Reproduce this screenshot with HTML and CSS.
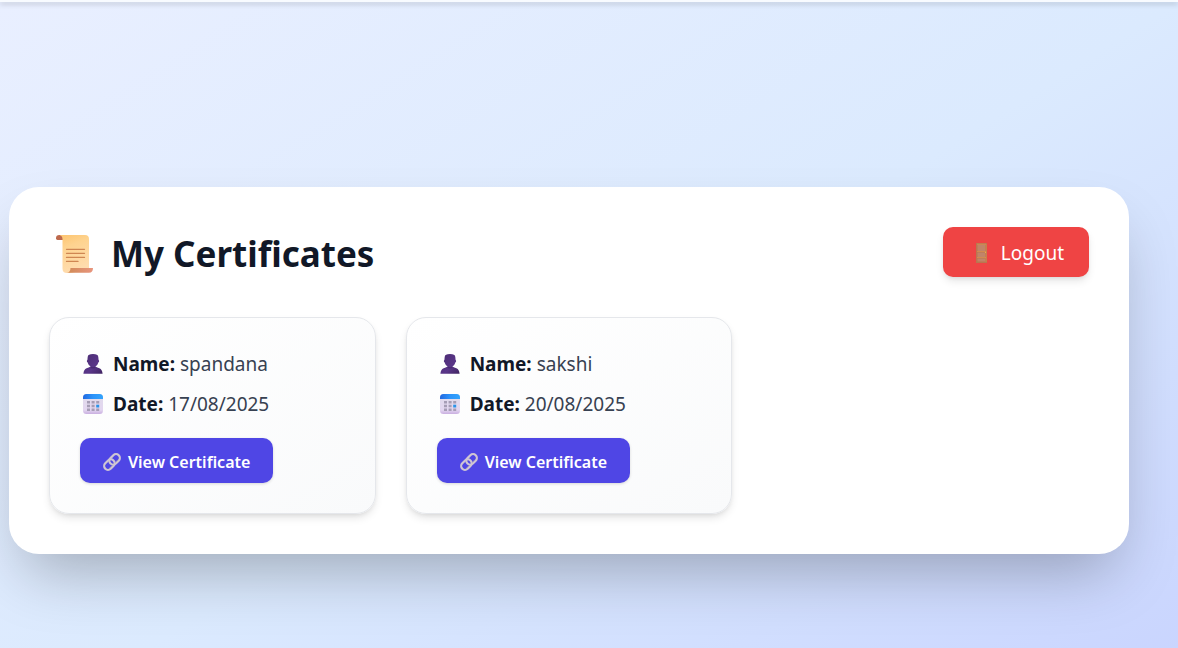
FILE: index.html
```html
<!DOCTYPE html>
<html lang="en">
<head>
<meta charset="utf-8">
<meta name="viewport" content="width=device-width, initial-scale=1">
<title>My Certificates</title>
<link rel="stylesheet" href="styles.css">
</head>
<body>
<svg class="defs" aria-hidden="true">
  <defs>
    <linearGradient id="paper" x1="0" y1="0" x2="0.3" y2="1"><stop offset="0" stop-color="#fdc46f"/><stop offset="0.35" stop-color="#fed38f"/><stop offset="1" stop-color="#ffdcae"/></linearGradient>
    <linearGradient id="curl" x1="0" y1="0" x2="1" y2="0"><stop offset="0" stop-color="#d08a55"/><stop offset="1" stop-color="#e8957e"/></linearGradient>
    <linearGradient id="skin" x1="0" y1="0" x2="1" y2="1"><stop offset="0" stop-color="#4a2c72"/><stop offset="0.6" stop-color="#5a3689"/><stop offset="1" stop-color="#3f2460"/></linearGradient>
    <linearGradient id="caltop" x1="0" y1="0" x2="1" y2="0"><stop offset="0" stop-color="#2168e0"/><stop offset="0.5" stop-color="#2b93fa"/><stop offset="1" stop-color="#33a4fc"/></linearGradient>
    <linearGradient id="calbody" x1="0" y1="0" x2="0" y2="1"><stop offset="0" stop-color="#e0dcea"/><stop offset="0.8" stop-color="#e3d6f0"/><stop offset="1" stop-color="#c9aee0"/></linearGradient>
    <symbol id="person" viewBox="0 0 20 20">
      <path fill="url(#skin)" d="M4.700 3C4.900 1 6.500.1 10 .1s5.100.9 5.300 2.900l.3 3c.8.300.7 2-.3 2.400-.5 1.900-1.500 3.200-3 4.100 1.500.8 2.700 1.200 4.100 1.800 2 .9 2.900 2.600 3.200 5.500H.4c.3-2.900 1.200-4.600 3.200-5.500 1.400-.6 2.600-1 4.100-1.800-1.500-.9-2.500-2.200-3-4.100-1-.4-1.100-2.100-.3-2.400z"/>
      <path fill="#38205a" opacity="0.45" d="M7.700 12.500c1.500.8 3.100.8 4.600 0v1.200c-1.200 1.200-3.400 1.200-4.600 0z"/>
    </symbol>
    <symbol id="calendar" viewBox="0 0 20 20">
      <rect width="20" height="20" rx="3.500" fill="url(#calbody)"/>
      <path fill="url(#caltop)" d="M0 5V3.500Q0 0 3.500 0h13Q20 0 20 3.500V5z"/>
      <g fill="#a69db5"><path d="M4 7h3v2.500H4zM8.600 7h3v2.500h-3zM13.200 7h3v2.500h-3zM4 10.700h3v2.500H4zM8.600 10.700h3v2.500h-3zM4 14.400h3v2.500H4zM8.600 14.400h3v2.500h-3zM13.200 14.400h3v2.500h-3z"/></g>
      <path fill="#2b93e8" d="M13.200 10.700h3v2.800h-3z"/>
    </symbol>
    <symbol id="link" viewBox="0 0 18 18">
      <g fill="none" stroke="#cfc5d3" stroke-width="2.200" transform="rotate(-45 9 9)">
        <rect x="-0.500" y="5.200" width="11.600" height="7.600" rx="3.800"/>
        <rect x="6.900" y="5.200" width="11.600" height="7.600" rx="3.800"/>
        <path stroke="#a99eaf" stroke-width="0.700" d="M3 11.600h4M11 11.600h4"/>
      </g>
    </symbol>
  </defs>
</svg>
<div class="topbar"></div>
<main class="page">
  <section class="panel">
    <header class="panel-head">
      <h1 class="title">
        <svg class="title-icon" viewBox="0 0 37 38" aria-hidden="true">
          <path fill="#bd694d" d="M0 3.300Q0 0 3.300 0H8v5H1.500Q0 5 0 3.300z"/>
          <path fill="url(#paper)" d="M3.500 0H29q4 0 4 4v29.500L15 38h-4q-4.500 0-4.500-4.500V4Q6.500 1 3.500 0z"/>
          <path fill="url(#curl)" d="M14.500 33H37q0 4.700-4 4.700H10.500q4 0 4-4.700z"/>
          <path fill="none" stroke="#cf8652" stroke-width="1.300" stroke-linecap="round" d="M10.500 14.300H28.500M10.500 18.300H28.500M10.500 22.400H28.500M10.500 26.400H22"/>
        </svg>
        My Certificates
      </h1>
      <button class="logout" type="button">
        <svg class="door-icon" viewBox="0 0 11 20" aria-hidden="true">
          <path fill="#b9764f" d="M0 0h11v20H0z"/>
          <path fill="#c18468" d="M1.500 1.500h7.500v6.500H1.500zM1.500 9.500h7.500v4.500H1.500zM1.500 15.500h7.500v3H1.500z"/>
          <path fill="none" stroke="#dc9450" stroke-width="0.700" d="M1 1.200h9v17.600M1 8.500h9M1 14.500h9"/>
          <path fill="#f0ab43" d="M9 9h1v1H9z"/>
        </svg>
        Logout
      </button>
    </header>
    <div class="cards">
      <article class="card">
        <p class="row"><svg class="row-icon" aria-hidden="true"><use href="#person"/></svg><span><strong>Name:</strong> spandana</span></p>
        <p class="row"><svg class="row-icon" aria-hidden="true"><use href="#calendar"/></svg><span><strong>Date:</strong> 17/08/2025</span></p>
        <a class="view" href="#spandana"><svg class="link-icon" aria-hidden="true"><use href="#link"/></svg>View Certificate</a>
      </article>
      <article class="card">
        <p class="row"><svg class="row-icon" aria-hidden="true"><use href="#person"/></svg><span><strong>Name:</strong> sakshi</span></p>
        <p class="row"><svg class="row-icon" aria-hidden="true"><use href="#calendar"/></svg><span><strong>Date:</strong> 20/08/2025</span></p>
        <a class="view" href="#sakshi"><svg class="link-icon" aria-hidden="true"><use href="#link"/></svg>View Certificate</a>
      </article>
    </div>
  </section>
</main>
</body>
</html>
```
FILE: styles.css
```css
*,
*::before,
*::after {
  box-sizing: border-box;
}

body {
  margin: 0;
  min-height: 100vh;
  font-family: "Segoe UI", "Noto Sans", "Open Sans", sans-serif;
  font-size: 19px;
  line-height: 30px;
  color: #374151;
  display: flex;
  flex-direction: column;
}

h1,
p {
  margin: 0;
}

.defs {
  position: absolute;
  width: 0;
  height: 0;
}

.topbar {
  position: relative;
  height: 2px;
  background: #f8fbff;
  box-shadow: 0 2px 5px rgba(0, 0, 0, 0.25);
}

.page {
  flex: 1;
  padding: 185px 49px 94px 9px;
  background: linear-gradient(to bottom right, #e9efff, #dbeafe 50%, #c7d2fe) 0 0 / 100% 738px;
}

.panel {
  max-width: 1120px;
  margin: 0 auto;
  padding: 40px;
  background: #ffffff;
  border-radius: 30px;
  box-shadow: 0 31px 62px -15px rgba(0, 0, 0, 0.28);
}

.panel-head {
  display: flex;
  justify-content: space-between;
  align-items: center;
  margin-bottom: 40px;
}

.title {
  display: flex;
  align-items: center;
  gap: 18px;
  padding: 4px 0 0 7px;
  font-size: 35px;
  font-weight: 700;
  line-height: 46px;
  color: #111827;
}

.title-icon {
  width: 37px;
  height: 38px;
}

.logout {
  display: flex;
  align-items: center;
  gap: 14px;
  height: 50px;
  padding: 2px 25px 0 33px;
  border: 0;
  border-radius: 10px;
  background: #ef4444;
  color: #ffffff;
  font: inherit;
  box-shadow: 0 5px 8px -1px rgba(0, 0, 0, 0.1), 0 2px 5px -2px rgba(0, 0, 0, 0.1);
}

.door-icon {
  width: 11px;
  height: 20px;
}

.cards {
  display: grid;
  grid-template-columns: repeat(3, 1fr);
  gap: 30px;
}

.card {
  padding: 31px 30px 30px;
  border: 1px solid #e5e7eb;
  border-radius: 20px;
  background: linear-gradient(to bottom right, #ffffff, #f9fafb);
  box-shadow: 0 5px 8px -1px rgba(0, 0, 0, 0.1), 0 2px 5px -2px rgba(0, 0, 0, 0.1);
}

.row {
  display: flex;
  align-items: center;
  gap: 10px;
  padding-left: 3px;
  margin-bottom: 10px;
}

.row strong {
  color: #111827;
}

.row-icon {
  width: 20px;
  height: 20px;
}

.view {
  display: inline-flex;
  align-items: center;
  gap: 7px;
  height: 45px;
  margin-top: 9px;
  padding: 2px 23px 0;
  border-radius: 10px;
  background: #4f46e5;
  color: #ffffff;
  font-size: 16px;
  font-weight: 600;
  text-decoration: none;
  box-shadow: 0 1px 3px rgba(0, 0, 0, 0.15);
  vertical-align: top;
}

.link-icon {
  width: 18px;
  height: 18px;
}
```
